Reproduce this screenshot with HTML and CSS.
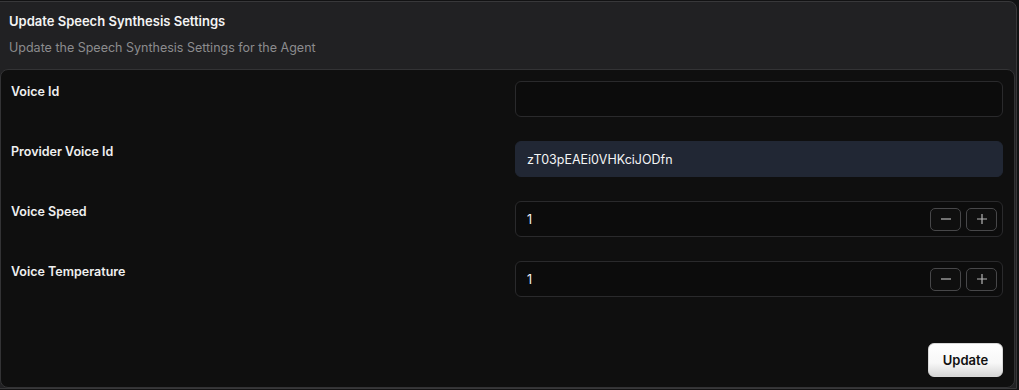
FILE: index.html
```html
<!DOCTYPE html>
<html>
<head>
<meta charset="utf-8">
<link rel="stylesheet" href="styles.css">
</head>
<body>
<div class="panel">
  <div class="header">
    <div class="title">Update Speech Synthesis Settings</div>
    <div class="subtitle">Update the Speech Synthesis Settings for the Agent</div>
  </div>
  <div class="card">
    <div class="form">
      <div class="label">Voice Id</div>
      <div class="field"><span class="value"></span></div>

      <div class="label">Provider Voice Id</div>
      <div class="field filled"><span class="value">zT03pEAEi0VHKciJODfn</span></div>

      <div class="label">Voice Speed</div>
      <div class="field">
        <span class="value">1</span>
        <div class="stepper">
          <button class="step"><svg width="12" height="12" viewBox="0 0 12 12"><path d="M1 6h10" stroke="#b5b5b5" stroke-width="1.2"/></svg></button>
          <button class="step"><svg width="12" height="12" viewBox="0 0 12 12"><path d="M1 6h10M6 1v10" stroke="#b5b5b5" stroke-width="1.2"/></svg></button>
        </div>
      </div>

      <div class="label">Voice Temperature</div>
      <div class="field">
        <span class="value">1</span>
        <div class="stepper">
          <button class="step"><svg width="12" height="12" viewBox="0 0 12 12"><path d="M1 6h10" stroke="#b5b5b5" stroke-width="1.2"/></svg></button>
          <button class="step"><svg width="12" height="12" viewBox="0 0 12 12"><path d="M1 6h10M6 1v10" stroke="#b5b5b5" stroke-width="1.2"/></svg></button>
        </div>
      </div>
    </div>
    <div class="actions">
      <button class="update">Update</button>
    </div>
  </div>
</div>
</body>
</html>
```

FILE: styles.css
```css
html, body {
  margin: 0;
  padding: 0;
  background: #121213;
  font-family: Inter, "Noto Sans", sans-serif;
  font-size: 13px;
  color: #f2f2f2;
}

.panel {
  margin: 1px 0 0 -1px;
  width: 1018px;
  height: 388px;
  box-sizing: border-box;
  background: #212123;
  border: 1px solid #38383a;
  border-radius: 0 8px 0 0;
  display: flex;
  flex-direction: column;
}

.header {
  flex: 0 0 67px;
  padding: 11px 0 0 9px;
  box-sizing: border-box;
}

.title {
  font-weight: 600;
  font-size: 13px;
  line-height: 17px;
  color: #f4f4f4;
}

.subtitle {
  margin-top: 9px;
  font-size: 12.5px;
  line-height: 17px;
  color: #8c8c8e;
}

.card {
  flex: 1;
  min-height: 0;
  background: #0f0f0f;
  border: 1px solid #333335;
  border-radius: 8px;
  margin-right: 1px;
  padding: 11px 11px 10px 10px;
  display: flex;
  flex-direction: column;
  justify-content: space-between;
}

.form {
  display: grid;
  grid-template-columns: 1fr 488px;
  column-gap: 14px;
  row-gap: 24px;
}

.label {
  font-weight: 600;
  font-size: 12.5px;
  line-height: 17px;
  padding-top: 2px;
  color: #f0f0f0;
}

.field {
  height: 36px;
  box-sizing: border-box;
  border: 1px solid #2a2a2c;
  border-radius: 6px;
  background: #0c0c0c;
  display: flex;
  align-items: center;
  justify-content: space-between;
  padding: 0 5px 0 11px;
}

.field.filled {
  background: #212734;
  border-color: #212734;
}

.value {
  color: #f4f4f4;
  font-size: 12.5px;
}

.stepper {
  display: flex;
  gap: 5px;
}

.step {
  width: 31px;
  height: 23px;
  border: 1px solid #474749;
  border-radius: 5px;
  background: #0f0f0f;
  display: flex;
  align-items: center;
  justify-content: center;
  padding: 0;
}

.actions {
  display: flex;
  justify-content: flex-end;
}

.update {
  width: 75px;
  height: 34px;
  border: 1px solid #d8d8d8;
  border-radius: 6px;
  background: linear-gradient(#ffffff 0%, #f7f7f7 60%, #d6d6d6 100%);
  font-family: Inter, "Noto Sans", sans-serif;
  font-size: 13px;
  font-weight: 600;
  color: #111;
  padding: 0;
}
```
